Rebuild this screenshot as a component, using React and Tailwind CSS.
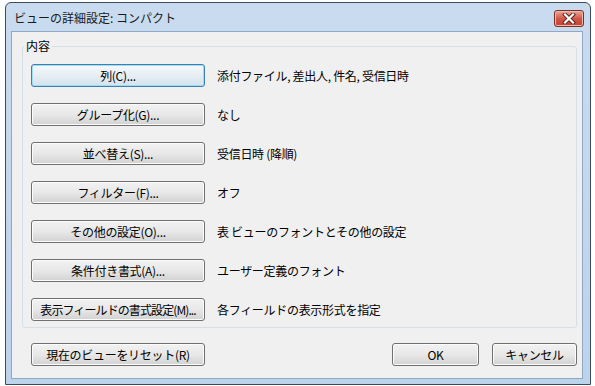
import React from 'react';

const font = { fontFamily: '"Noto Sans CJK JP", "Noto Sans", sans-serif' };

const rows = [
  { label: '列(C)...', desc: '添付ファイル, 差出人, 件名, 受信日時', focused: true },
  { label: 'グループ化(G)...', desc: 'なし' },
  { label: '並べ替え(S)...', desc: '受信日時 (降順)' },
  { label: 'フィルター(F)...', desc: 'オフ' },
  { label: 'その他の設定(O)...', desc: '表 ビューのフォントとその他の設定' },
  { label: '条件付き書式(A)...', desc: 'ユーザー定義のフォント' },
  { label: '表示フィールドの書式設定(M)...', desc: '各フィールドの表示形式を指定', tight: true },
];

// Win7 風のボタン
const Button = ({ children, width, focused, tight }) => (
  <div
    className={
      'h-[23px] shrink-0 rounded-[3px] border flex items-center justify-center text-[12px] leading-none text-black whitespace-nowrap ' +
      (tight ? 'tracking-[-0.9px] ' : 'tracking-[-0.3px] ') +
      (focused
        ? 'border-[#3c7fb1] shadow-[inset_0_0_0_1px_#9fdcf5] bg-gradient-to-b from-[#f4f9fc] via-[#e6eef3] to-[#d4e3ec]'
        : 'border-[#707070] shadow-[inset_0_0_0_1px_#fcfcfc] bg-gradient-to-b from-[#f2f2f2] via-[#e8e8e8] to-[#d2d2d2]')
    }
    style={{ width }}
  >
    {children}
  </div>
);

const CloseButton = () => (
  <div className="w-[30px] h-[17px] mt-[3px] rounded-[3px] border border-[#7a2f26] bg-gradient-to-b from-[#e9a899] via-[#d0584a] to-[#c4402e] flex items-center justify-center shadow-[inset_0_0_0_1px_#eeb8ac]">
    <svg width="14" height="11" viewBox="0 0 14 11">
      <path d="M3 1.5 L11 9.5 M11 1.5 L3 9.5" stroke="#5a1e16" strokeWidth="4" strokeLinecap="square" />
      <path d="M3 1.5 L11 9.5 M11 1.5 L3 9.5" stroke="#ffffff" strokeWidth="2.2" strokeLinecap="square" />
    </svg>
  </div>
);

export default function App() {
  return (
    <div className="w-[595px] h-[386px] bg-white pt-[2px] pl-[5px]" style={font}>
      <div className="w-[586px] h-[383px] border border-[#3d4b5a] rounded-t-[6px] bg-gradient-to-b from-[#c9dbef] to-[#bcd3ec] flex flex-col">
        {/* タイトルバー */}
        <div className="h-[28px] flex items-center justify-between pl-[8px] pr-[6px]">
          <span className="text-[12px] text-[#1a1a1a] mt-[1px]">ビューの詳細設定: コンパクト</span>
          <CloseButton />
        </div>

        {/* クライアント領域 */}
        <div className="ml-[5px] w-[572px] h-[348px] border border-[#90a8c4] bg-[#f0f0f0] pl-[10px] pt-[14px]">
          <div className="relative w-[555px] h-[282px] border border-[#d5dfe5] rounded-[3px] pl-[8px] pt-[17px] flex flex-col gap-[16px]">
            <span className="absolute -top-[9px] left-[1px] bg-[#f0f0f0] px-[2px] text-[12px] leading-[16px] text-black">内容</span>
            {rows.map(r => (
              <div key={r.label} className="flex items-center gap-[12px]">
                <Button width={174} focused={r.focused} tight={r.tight}>{r.label}</Button>
                <span className="text-[12px] tracking-[-0.3px] text-black">{r.desc}</span>
              </div>
            ))}
          </div>

          <div className="w-[555px] mt-[15px] flex items-center">
            <div className="ml-[9px]">
              <Button width={174}>現在のビューをリセット(R)</Button>
            </div>
            <div className="ml-auto flex gap-[13px]">
              <Button width={87}>OK</Button>
              <Button width={85}>キャンセル</Button>
            </div>
          </div>
        </div>
      </div>
    </div>
  );
}
